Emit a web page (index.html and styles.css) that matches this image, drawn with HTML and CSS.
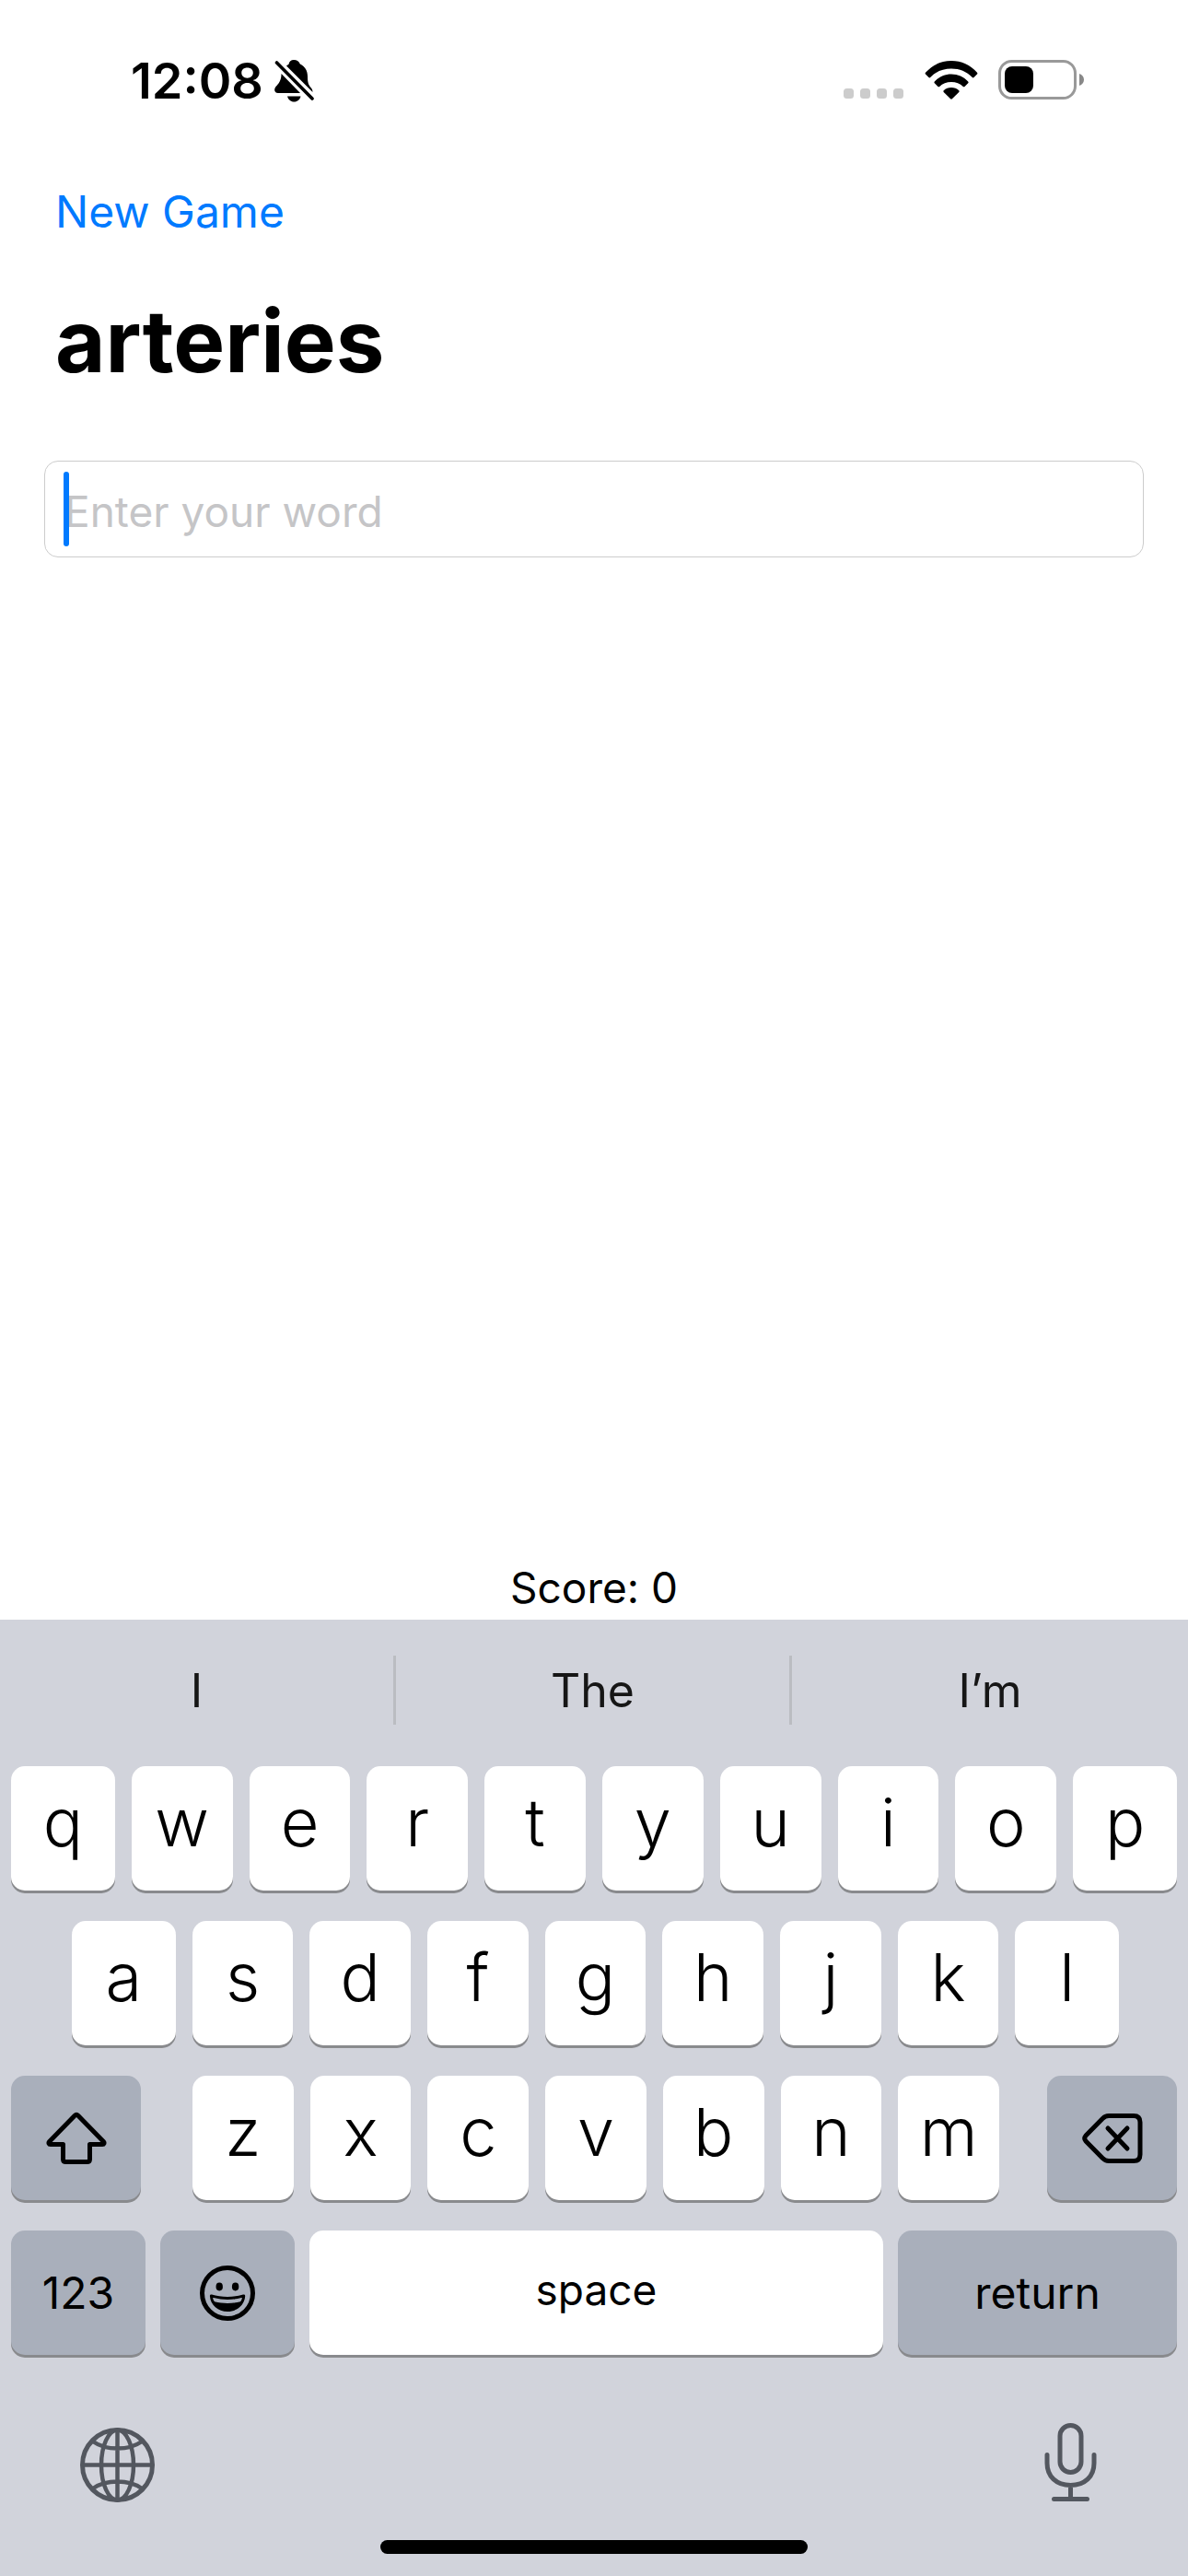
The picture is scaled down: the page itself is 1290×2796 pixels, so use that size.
FILE: index.html
```html
<!DOCTYPE html>
<html lang="en">
<head>
<meta charset="utf-8">
<meta name="viewport" content="width=device-width, initial-scale=1">
<title>Word Scramble</title>
<link rel="stylesheet" href="styles.css">
</head>
<body>
<header class="status-bar">
  <div class="status-left">
    <time class="clock">12:08</time>
    <svg class="icon" width="44" height="48" viewBox="0 0 44 48" role="img" aria-label="Silent mode">
      <path d="M21 1c3.500 0 6 2 6.800 4.500C33 8 36 12.500 36 19c0 7 1 9 3.500 12 1.500 2 2 3 2 5L13 7.500c1-.8 1.800-1.300 2.500-1.700C16 3 18 1 21 1Z"/>
      <path d="M7.500 16 28 37H4c-4 0-5-4-2.500-7C5 26.500 7.500 23 7.500 16Z"/>
      <path d="M14 40.500h14.500c-.8 3.500-3.500 6-7.200 6S15 44 14 40.500Z"/>
      <path d="M2.500 4 41 43" fill="none" stroke="currentColor" stroke-width="3.600" stroke-linecap="round"/>
    </svg>
  </div>
  <div class="status-right">
    <svg class="icon" width="66" height="44" viewBox="0 0 66 44" role="img" aria-label="No signal">
      <g fill="#ccc"><rect y="31" width="11" height="11" rx="3.500"/><rect x="18" y="31" width="11" height="11" rx="3.500"/><rect x="36" y="31" width="11" height="11" rx="3.500"/><rect x="54" y="31" width="11" height="11" rx="3.500"/></g>
    </svg>
    <svg class="icon" width="58" height="44" viewBox="0 0 58 44" role="img" aria-label="Wi-Fi">
      <path d="M1 13.800C8.500 5.500 18 1 29 1s20.500 4.500 28 12.800c.5.600.5 1.200 0 1.700l-3.500 3.500c-.5.500-1.200.5-1.700 0C45.500 12.500 38 9.500 29 9.500S12.500 12.500 6.200 19c-.5.500-1.200.5-1.700 0L1 15.500c-.5-.5-.5-1.100 0-1.700Z"/>
      <path d="M10.800 23.500C15.500 18.400 21.800 15.500 29 15.500s13.500 2.900 18.200 8c.5.600.5 1.200 0 1.700l-3.700 3.700c-.5.500-1.200.5-1.700 0C38.500 25.800 34 24 29 24s-9.500 1.800-12.800 4.900c-.5.500-1.200.5-1.700 0l-3.700-3.700c-.5-.5-.5-1.100 0-1.700Z"/>
      <path d="M20.700 33.200C23 31.100 25.800 30 29 30s6 1.100 8.300 3.200c.5.500.5 1.100 0 1.700l-7.400 7.400c-.6.600-1.200.6-1.800 0l-7.400-7.400c-.5-.6-.5-1.200 0-1.700Z"/>
    </svg>
    <svg class="icon" width="94" height="44" viewBox="0 0 94 44" role="img" aria-label="Battery">
      <rect x="1.500" y="1.500" width="82" height="40" rx="13" fill="none" stroke="#999" stroke-width="3"/>
      <rect x="7" y="7" width="31" height="29" rx="8"/>
      <path d="M88 15c3 1 5 3.500 5 6.500S91 27 88 28Z" fill="#888"/>
    </svg>
  </div>
</header>

<main class="game">
  <nav class="nav"><button class="new-game" type="button">New Game</button></nav>
  <h1 class="root-word">arteries</h1>
  <form class="entry">
    <input class="word-input" type="text" placeholder="Enter your word" aria-label="Enter your word" autocomplete="off">
    <span class="caret"></span>
  </form>
  <p class="score">Score: 0</p>
</main>

<section class="keyboard" aria-label="Keyboard">
  <div class="suggestions">
    <button class="suggestion" type="button">I</button>
    <button class="suggestion" type="button">The</button>
    <button class="suggestion" type="button">I’m</button>
  </div>
  <div class="rows">
    <div class="row row-top">
      <button class="key" type="button">q</button><button class="key" type="button">w</button><button class="key" type="button">e</button><button class="key" type="button">r</button><button class="key" type="button">t</button><button class="key" type="button">y</button><button class="key" type="button">u</button><button class="key" type="button">i</button><button class="key" type="button">o</button><button class="key" type="button">p</button>
    </div>
    <div class="row row-home">
      <button class="key" type="button">a</button><button class="key" type="button">s</button><button class="key" type="button">d</button><button class="key" type="button">f</button><button class="key" type="button">g</button><button class="key" type="button">h</button><button class="key" type="button">j</button><button class="key" type="button">k</button><button class="key" type="button">l</button>
    </div>
    <div class="row row-lower">
      <button class="key key-dark" type="button" aria-label="Shift">
        <svg class="icon" width="66" height="58" viewBox="0 0 66 58"><path d="M31.200 4.200 3.600 32.500c-1.200 1.300-.6 3 1.200 3H18.500v16c0 2 1 3 3 3h23c2 0 3-1 3-3v-16h13.700c1.800 0 2.400-1.700 1.200-3L34.800 4.200c-1.200-1.200-2.400-1.200-3.600 0Z" fill="none" stroke="currentColor" stroke-width="5" stroke-linejoin="round"/></svg>
      </button>
      <div class="letters">
        <button class="key" type="button">z</button><button class="key" type="button">x</button><button class="key" type="button">c</button><button class="key" type="button">v</button><button class="key" type="button">b</button><button class="key" type="button">n</button><button class="key" type="button">m</button>
      </div>
      <button class="key key-dark" type="button" aria-label="Delete">
        <svg class="icon" width="66" height="58" viewBox="0 0 66 58" fill="none" stroke="currentColor" stroke-width="5" stroke-linecap="round" stroke-linejoin="round"><path d="M29 4.500h27q7 0 7 7v35q0 7-7 7H29q-4 0-6.500-2.800L4 32q-2.500-3 0-6L22.500 7.300Q25 4.500 29 4.500Z"/><path d="m28 18 21 22M49 18 28 40"/></svg>
      </button>
    </div>
    <div class="row row-bottom">
      <button class="key key-dark key-word" type="button">123</button>
      <button class="key key-dark" type="button" aria-label="Emoji">
        <svg class="icon" width="60" height="60" viewBox="0 0 60 60"><circle cx="30" cy="30" r="27.500" fill="none" stroke="currentColor" stroke-width="5"/><ellipse cx="21.200" cy="23" rx="3.700" ry="4.400"/><ellipse cx="38.600" cy="23" rx="3.700" ry="4.400"/><path fill-rule="evenodd" d="M13 31.500c10 3.200 24 3.200 34 0 1.400-.4 2.300.3 2.200 1.700C48.500 43 40 50 30 50S11.500 43 10.900 33.200c-.1-1.400.7-2.100 2.100-1.700ZM15 35c-.8-.2-1 .2-.7 1 .3 1.300.8 2.300 1.700 3.300 9 2.200 19 2.200 28 0 .9-1 1.400-2 1.700-3.300.3-.8.100-1.200-.7-1-10 2.600-20 2.600-30 0Z"/></svg>
      </button>
      <button class="key key-word key-space" type="button">space</button>
      <button class="key key-dark key-word" type="button">return</button>
    </div>
  </div>
  <div class="tools">
    <button class="tool" type="button" aria-label="Next keyboard">
      <svg class="icon" width="81" height="81" viewBox="0 0 81 81" fill="none" stroke="currentColor" stroke-width="4.500"><circle cx="40.500" cy="40.500" r="38" stroke-width="5"/><ellipse cx="40.500" cy="40.500" rx="17.500" ry="38"/><path d="M40.500 2v77M2 40.500h77M14 15c14 10 39 10 53 0M14 66c14-10 39-10 53 0"/></svg>
    </button>
    <button class="tool" type="button" aria-label="Dictate">
      <svg class="icon" width="57" height="86" viewBox="0 0 57 86" fill="none" stroke="currentColor" stroke-width="5" stroke-linecap="round"><rect x="17" y="2.500" width="23" height="51" rx="11.500"/><path d="M3 34.500v9C3 58 13 67.500 28.500 67.500S54 58 54 43.500v-9M28.500 67.500v15M10.500 82.500h36"/></svg>
    </button>
  </div>
  <div class="home-indicator"></div>
</section>
</body>
</html>
```
FILE: styles.css
```css
* { box-sizing: border-box; }

body {
  margin: 0;
  min-height: 100vh;
  display: flex;
  flex-direction: column;
  background: #fff;
  color: #000;
  font-family: Inter, "Liberation Sans", sans-serif;
  font-size: 46px;
}

button {
  margin: 0;
  padding: 0;
  border: 0;
  background: none;
  color: inherit;
  font: inherit;
}

.icon { display: block; flex: none; fill: currentColor; }
.icon[fill="none"] { fill: none; }

/* Status bar */
.status-bar {
  display: flex;
  justify-content: space-between;
  padding: 56px 112px 0 142px;
}
.status-left { display: flex; align-items: center; gap: 12px; height: 64px; }
.clock { font-size: 54px; font-weight: 600; line-height: 64px; }
.status-right { display: flex; align-items: center; gap: 22px; height: 62px; }

/* Game */
.game { flex: 1; display: flex; flex-direction: column; }
.nav { padding: 80px 60px 0; }
.new-game { display: block; color: #007aff; font-size: 48px; line-height: 60px; }
.root-word {
  margin: 52px 60px 0;
  font-size: 94px;
  font-weight: 700;
  line-height: 116px;
}
.entry { position: relative; margin: 72px 48px 0; }
.word-input {
  display: block;
  width: 100%;
  height: 105px;
  padding: 4px 21px 0;
  border: 1px solid #ccc;
  border-radius: 15px;
  background: #fff;
  font: inherit;
  outline: 0;
}
.word-input::placeholder { color: #c5c5c7; opacity: 1; }
.caret {
  position: absolute;
  top: 12px;
  left: 21px;
  width: 6px;
  height: 81px;
  border-radius: 3px;
  background: #007aff;
}
.score { margin: auto 0 6px; line-height: 58px; text-align: center; }

/* Keyboard */
.keyboard { padding-bottom: 24px; background: #d1d3db; }
.suggestions {
  display: grid;
  grid-template-columns: repeat(3, 1fr);
  align-items: center;
  height: 153px;
}
.suggestion { height: 75px; color: #161616; font-size: 50px; }
.suggestion:not(:last-child) { border-right: 3px solid #bbbdc2; }

.rows { display: grid; gap: 33px; padding: 6px 12px 0; }
.row, .letters { display: grid; gap: 18px; }
.row-top { grid-template-columns: 113fr repeat(8, 110fr) 113fr; }
.row-home { grid-template-columns: 113fr repeat(7, 110fr) 113fr; padding: 0 63px 0 66px; }
.letters { grid-template-columns: repeat(7, 1fr); padding-left: 4px; }
.row-lower { grid-template-columns: 141px 1fr 141px; gap: 52px; }
.row-bottom { grid-template-columns: 146px 146px 1fr 303px; gap: 16px; }

.key {
  display: flex;
  align-items: center;
  justify-content: center;
  height: 135px;
  padding-bottom: 14px;
  border-radius: 15px;
  background: #fff;
  box-shadow: 0 3px #898a8d;
  font-size: 72px;
  font-weight: 350;
}
.key-dark { padding-bottom: 0; background: #a9afbb; }
.key-word { padding-bottom: 0; font-size: 48px; font-weight: 400; }
.key-space { padding-bottom: 8px; font-size: 46px; }

.tools {
  display: flex;
  align-items: flex-end;
  justify-content: space-between;
  padding: 74px 99px 0 87px;
  color: #53575f;
}
.home-indicator {
  width: 36%;
  height: 15px;
  margin: 41px auto 0;
  border-radius: 8px;
  background: #000;
}
```
